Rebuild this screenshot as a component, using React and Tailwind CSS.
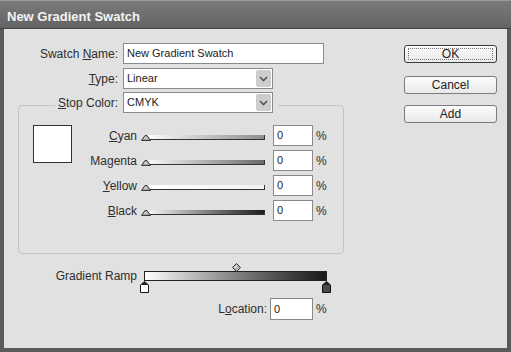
import React from "react";

const font = { fontFamily: '"Liberation Sans", Arial, sans-serif' };

function Chevron() {
  return (
    <svg width="9" height="6" viewBox="0 0 9 6">
      <polyline points="1,1 4.5,4.5 8,1" fill="none" stroke="#555" strokeWidth="1.6" />
    </svg>
  );
}

function Dropdown({ value }) {
  return (
    <div className="ml-[5px] flex h-[21px] w-[150px] items-center border border-[#8a8a8a] bg-white">
      <span className="pl-[3px] text-[11px] text-[#222]">{value}</span>
      <div className="ml-auto mr-[1px] flex h-[17px] w-[15px] items-center justify-center rounded-[2px] bg-[#cdcdcd]">
        <Chevron />
      </div>
    </div>
  );
}

function Thumb() {
  return (
    <svg width="10" height="7" viewBox="0 0 10 7" className="absolute bottom-[-1px] left-0">
      <polygon points="0.5,6.5 4,1.5 6,1.5 9.5,6.5" fill="#a8a8a8" stroke="#3a3a3a" strokeWidth="1" />
      <line x1="3" y1="4" x2="6.5" y2="4" stroke="#e8e8e8" strokeWidth="1" />
    </svg>
  );
}

function SliderRow({ u, rest, pre = "", grad }) {
  return (
    <div className="flex h-[21px] items-center">
      <div className="w-[65px] text-right text-[12px] text-[#2e2e2e]">
        {pre}
        <span className="underline">{u}</span>
        {rest}
      </div>
      <div className="relative ml-[4px] h-[8px] w-[124px]">
        <div className={`absolute bottom-0 left-[4px] right-0 h-[5px] border-b border-r border-[#333] ${grad}`} />
        <Thumb />
      </div>
      <div className="ml-[8px] flex h-[21px] w-[40px] items-center border border-[#8a8a8a] bg-white pl-[3px] text-[11px] text-[#222]">
        0
      </div>
      <span className="ml-[3px] text-[12px] text-[#2e2e2e]">%</span>
    </div>
  );
}

function Btn({ children, focus, className }) {
  return (
    <div
      className={`flex h-[18px] w-[93px] items-center justify-center rounded-[3px] border bg-gradient-to-b from-[#fbfbfb] to-[#e9e9e9] text-[12px] text-[#222] ${
        focus ? "border-[#3c3c3c]" : "border-[#7c7c7c]"
      } ${className}`}
    >
      {focus ? (
        <div className="flex h-[12px] w-[85px] items-center justify-center border border-dotted border-[#777]">
          {children}
        </div>
      ) : (
        children
      )}
    </div>
  );
}

export default function App() {
  return (
    <div className="flex h-[352px] w-[511px] flex-col bg-[#5a5a5a]" style={font}>
      <div className="h-[29px] shrink-0 border-t border-b border-t-[#9a9a9a] border-b-[#444] bg-gradient-to-b from-[#7a7a7a] to-[#646464] pl-[7px] pt-[8px]">
        <div className="text-[13px] font-bold leading-[15px] text-[#f4f4f4]">New Gradient Swatch</div>
      </div>
      <div className="flex flex-1 px-[4px] pb-[4px]">
        <div className="flex flex-1 bg-[#e1e1e1]">
          <div className="flex flex-col pl-[14px] pt-[14px]">
            <div className="flex h-[21px] items-center">
              <div className="w-[100px] text-right text-[12px] text-[#2e2e2e]">
                Swatch <span className="underline">N</span>ame:
              </div>
              <div className="ml-[5px] flex h-[21px] w-[201px] items-center border border-[#8a8a8a] bg-white pl-[3px] text-[11px] text-[#222]">
                New Gradient Swatch
              </div>
            </div>
            <div className="mt-[4px] flex h-[21px] items-center">
              <div className="w-[100px] text-right text-[12px] text-[#2e2e2e]">
                <span className="underline">T</span>ype:
              </div>
              <Dropdown value="Linear" />
            </div>
            <fieldset className="mt-[3px] w-[326px] rounded-[4px] border border-[#c4c4c4] pb-[32px] pl-[14px] pt-[7px]">
              <legend className="ml-[22px] flex items-center pb-[5px] pl-[3px] pr-[5px]">
                <span className="whitespace-nowrap text-[12px] text-[#2e2e2e]">
                  <span className="underline">S</span>top Color:
                </span>
                <Dropdown value="CMYK" />
              </legend>
              <div className="flex">
                <div className="h-[38px] w-[39px] border border-[#333] bg-white" />
                <div className="flex flex-col gap-[4px]">
                  <SliderRow u="C" rest="yan" grad="bg-gradient-to-r from-white to-[#8f8f8f]" />
                  <SliderRow pre="Ma" u="g" rest="enta" grad="bg-gradient-to-r from-white to-[#6a6a6a]" />
                  <SliderRow u="Y" rest="ellow" grad="bg-gradient-to-r from-white to-[#f2f2f2]" />
                  <SliderRow u="B" rest="lack" grad="bg-gradient-to-r from-white to-[#1e1e1e]" />
                </div>
              </div>
            </fieldset>
            <div className="mt-[13px] flex items-center">
              <div className="w-[119px] text-right text-[12px] text-[#2e2e2e]">Gradient Ramp</div>
              <div className="relative ml-[7px] h-[10px] w-[183px] border border-[#222] bg-gradient-to-r from-white to-[#1a1a1a]">
                <svg width="9" height="9" viewBox="0 0 9 9" className="absolute left-[87px] top-[-9px]">
                  <polygon points="4.5,0.5 8.5,4.5 4.5,8.5 0.5,4.5" fill="#b5b5b5" stroke="#333" strokeWidth="1" />
                  <polygon points="4.5,2 2,4.5 4.5,4.5" fill="#eee" />
                </svg>
                <svg width="9" height="12" viewBox="0 0 9 12" className="absolute left-[-5px] top-[9px]">
                  <polygon points="4.5,0.5 8.5,4 8.5,11.5 0.5,11.5 0.5,4" fill="#fff" stroke="#111" strokeWidth="1" />
                  <polygon points="4.5,0.5 8.5,4 0.5,4" fill="#222" />
                </svg>
                <svg width="9" height="12" viewBox="0 0 9 12" className="absolute right-[-5px] top-[9px]">
                  <polygon points="4.5,0.5 8.5,4 8.5,11.5 0.5,11.5 0.5,4" fill="#4a4a4a" stroke="#111" strokeWidth="1" />
                  <polygon points="4.5,0.5 8.5,4 0.5,4" fill="#222" />
                </svg>
              </div>
            </div>
            <div className="mt-[13px] flex h-[22px] items-center">
              <div className="w-[249px] text-right text-[12px] text-[#2e2e2e]">
                L<span className="underline">o</span>cation:
              </div>
              <div className="ml-[3px] flex h-[22px] w-[43px] items-center border border-[#8a8a8a] bg-white pl-[3px] text-[11px] text-[#222]">
                0
              </div>
              <span className="ml-[3px] text-[12px] text-[#2e2e2e]">%</span>
            </div>
          </div>
          <div className="ml-auto flex flex-col pr-[10px] pt-[16px]">
            <Btn focus>OK</Btn>
            <Btn className="mt-[13px]">Cancel</Btn>
            <Btn className="mt-[11px]">Add</Btn>
          </div>
        </div>
      </div>
    </div>
  );
}
